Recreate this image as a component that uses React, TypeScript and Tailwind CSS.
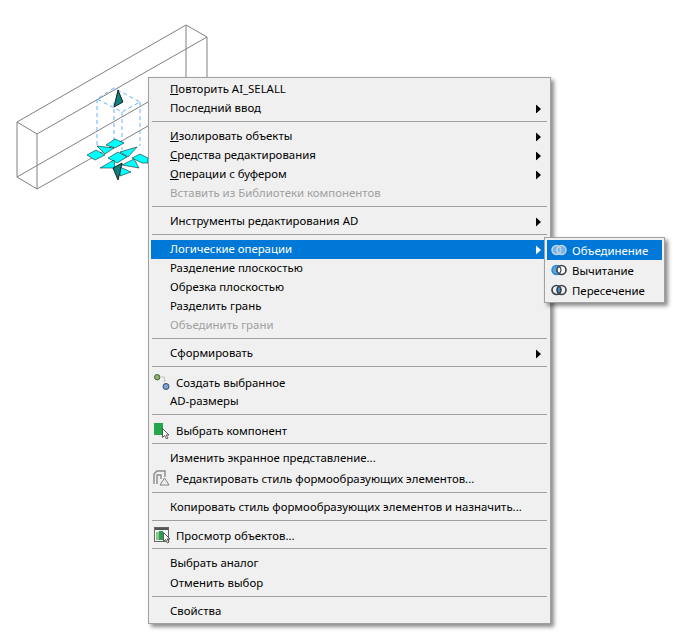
import type { ReactNode } from "react";

type Row = {
  label?: string;
  mnemonic?: boolean;
  arrow?: boolean;
  disabled?: boolean;
  active?: boolean;
  icon?: ReactNode;
  h?: string;
  shift?: string;
  sep?: boolean;
};

const LENS = "M8 2.26 A4.5 4.5 0 0 1 8 9.74 A4.5 4.5 0 0 1 8 2.26 Z";

function Arrow({ white }: { white?: boolean }) {
  return (
    <svg width="5" height="9" viewBox="0 0 5 9" className="absolute right-[7px] top-1/2 -translate-y-1/2">
      <path d="M0 0 L5 4.5 L0 9 Z" fill={white ? "#ffffff" : "#000000"} />
    </svg>
  );
}

function FavoriteIcon() {
  return (
    <svg width="18" height="18" viewBox="0 0 18 18">
      <path d="M7 3 H10.5 V7 M9.5 6 L10.5 7.5 L11.5 6" fill="none" stroke="#c4c4c4" />
      <circle cx="3.2" cy="3.2" r="2.7" fill="#8fb36c" stroke="#46603a" />
      <circle cx="12" cy="12.5" r="3" fill="#7fa3d0" stroke="#2f4a6e" />
    </svg>
  );
}

function Cursor({ x, y }: { x: number; y: number }) {
  return (
    <path
      d={`M${x + 0.5} ${y + 0.5} v9 l2 -2 l2 3.5 l1.5 -1 l-2 -3 h3 Z`}
      fill="#ffffff"
      stroke="#333333"
      strokeWidth="0.8"
    />
  );
}

function PickIcon() {
  return (
    <svg width="18" height="16" viewBox="0 0 18 16">
      <rect x="0" y="0" width="9" height="12" fill="#22a84a" />
      <Cursor x={8} y={5} />
    </svg>
  );
}

function StyleIcon() {
  return (
    <svg width="18" height="16" viewBox="0 0 18 16">
      <path d="M1 14 V4 L4 1 H12 V7 M4 14 V5 H8 V9" fill="none" stroke="#8a8a8a" strokeWidth="1.4" />
      <path d="M7 15 L11.5 8 L16 15 Z" fill="#f2f2f2" stroke="#808080" />
    </svg>
  );
}

function ViewIcon() {
  return (
    <svg width="18" height="17" viewBox="0 0 18 17">
      <rect x="0.5" y="0.5" width="14" height="14" fill="#f4f4f4" stroke="#666666" />
      <rect x="1" y="1" width="13" height="2" fill="#555555" />
      <rect x="2" y="5" width="3" height="8" fill="#86c98f" />
      <rect x="5" y="4" width="4" height="9" fill="#2f9c4f" />
      <Cursor x={9} y={5} />
    </svg>
  );
}

function Venn({ kind, onBlue }: { kind: "union" | "subtract" | "intersect"; onBlue?: boolean }) {
  if (kind === "union") {
    const edge = onBlue ? "#c3d3e2" : "#5a6470";
    return (
      <svg width="16" height="12" viewBox="0 0 16 12">
        <circle cx="5.5" cy="6" r="4.5" fill="#73b4ea" stroke={edge} strokeWidth="1.5" />
        <circle cx="10.5" cy="6" r="4.5" fill="#73b4ea" stroke={edge} strokeWidth="1.5" />
        <path d={LENS} fill="#7fb9ea" stroke={edge} strokeWidth="1.2" />
      </svg>
    );
  }
  if (kind === "subtract") {
    return (
      <svg width="16" height="12" viewBox="0 0 16 12">
        <circle cx="5.5" cy="6" r="4.5" fill="#5aa5e0" stroke="#2f86d0" strokeWidth="1.5" />
        <circle cx="10.5" cy="6" r="4.5" fill="#f8f8f8" stroke="#3f444a" strokeWidth="1.7" />
        <path d={LENS} fill="#ffffff" stroke="#3f444a" strokeWidth="1.2" />
      </svg>
    );
  }
  return (
    <svg width="16" height="12" viewBox="0 0 16 12">
      <path d={LENS} fill="#3f8fd8" />
      <circle cx="5.5" cy="6" r="4.5" fill="none" stroke="#3f444a" strokeWidth="1.7" />
      <circle cx="10.5" cy="6" r="4.5" fill="none" stroke="#3f444a" strokeWidth="1.7" />
    </svg>
  );
}

const rows: Row[] = [
  { label: "Повторить AI_SELALL", mnemonic: true },
  { label: "Последний ввод", arrow: true },
  { sep: true },
  { label: "Изолировать объекты", mnemonic: true, arrow: true },
  { label: "Средства редактирования", mnemonic: true, arrow: true },
  { label: "Операции с буфером", mnemonic: true, arrow: true },
  { label: "Вставить из Библиотеки компонентов", disabled: true },
  { sep: true },
  { label: "Инструменты редактирования AD", arrow: true },
  { sep: true },
  { label: "Логические операции", arrow: true, active: true },
  { label: "Разделение плоскостью" },
  { label: "Обрезка плоскостью" },
  { label: "Разделить грань" },
  { label: "Объединить грани", disabled: true },
  { sep: true },
  { label: "Сформировать", arrow: true },
  { sep: true },
  { label: "Создать выбранное", icon: <span className="mt-[2px] ml-[3px] flex"><FavoriteIcon /></span>, h: "h-[20px]", shift: "pt-[2px]" },
  { label: "AD-размеры" },
  { sep: true },
  { label: "Выбрать компонент", icon: <span className="mt-[3px] ml-[3px] flex"><PickIcon /></span>, h: "h-[20px]", shift: "pt-[2px]" },
  { sep: true },
  { label: "Изменить экранное представление..." },
  { label: "Редактировать стиль формообразующих элементов...", icon: <span className="mt-[2px] ml-[2px] flex"><StyleIcon /></span>, h: "h-[21px]", shift: "pb-0" },
  { sep: true },
  { label: "Копировать стиль формообразующих элементов и назначить..." },
  { sep: true },
  { label: "Просмотр объектов...", icon: <span className="mt-[1px] ml-[3px] flex"><ViewIcon /></span>, shift: "pb-0" },
  { sep: true },
  { label: "Выбрать аналог", h: "h-[20px]" },
  { label: "Отменить выбор" },
  { sep: true },
  { label: "Свойства" },
];

function MenuRow({ row }: { row: Row }) {
  if (row.sep) {
    return (
      <div className="h-[9px] px-[1px] pt-[3px]">
        <div className="h-px w-full bg-[#a0a0a0]" />
      </div>
    );
  }
  const color = row.active ? "text-white" : row.disabled ? "text-[#a0a0a0]" : "text-black";
  const label = row.label ?? "";
  return (
    <div
      className={`relative flex items-center ${row.h ?? "h-[19px]"} ${row.active ? "bg-[#0078d7]" : ""} ${color} ${row.icon ? "pl-[25px]" : "pl-[19px]"}`}
    >
      {row.icon && <span className="absolute left-0 top-0 flex">{row.icon}</span>}
      <span className={`whitespace-nowrap ${row.shift ?? "pb-[2px]"}`}>
        {row.mnemonic ? (
          <>
            <span className="underline">{label[0]}</span>
            {label.slice(1)}
          </>
        ) : (
          label
        )}
      </span>
      {row.arrow && <Arrow white={row.active} />}
    </div>
  );
}

function Drawing() {
  return (
    <svg width="210" height="192" viewBox="0 0 210 192" className="absolute left-0 top-0">
      <g stroke="#808080" fill="none">
        <path d="M186 25 L207 37 M17 122 L186 25 M37 134 L207 37 M17 122 L37 134 M17 122 V177 M37 134 V189 M17 177 L37 189 M186 25 V77 M207 37 V77" />
        <path d="M37 189 L148 126 M17 177 L148 102" />
      </g>
      <g stroke="#66b2ff" fill="none" strokeDasharray="4 3">
        <path d="M114 88 L97 99 L122 112 L140 102 L114 88 M97 99 V146 M140 102 V146 M122 112 V150 M114 102 V142" />
      </g>
      <path d="M118 90 L123 102 L114 107 Z" fill="#0f7f7f" stroke="#000000" strokeWidth="0.8" />
      <g fill="#00ffff" stroke="#000000" strokeWidth="0.5">
        <path d="M106 145 L115 139 L124 143 L115 148 Z" />
        <path d="M87 155 L96 150 L105 155 L95 160 Z" />
        <path d="M97 146 L114 148 L105 154 Z" />
        <path d="M120 152 L137 147 L128 157 Z" />
        <path d="M108 158 L118 152 L127 157 L117 163 Z" />
        <path d="M100 168 L114 160 L115 168 Z" />
        <path d="M132 158 L140 154 L148 158 L148 163 L142 163 Z" />
        <path d="M122 165 L134 159 L139 168 Z" />
        <path d="M120 167 L131 172 L120 176 Z" />
      </g>
      <path d="M113 168 L122 163 L120 172 L118 180 Z" fill="#0f7f7f" stroke="#000000" strokeWidth="0.8" />
    </svg>
  );
}

export default function App() {
  return (
    <div className="relative h-[641px] w-[673px] overflow-hidden bg-white font-['Noto_Sans',sans-serif] text-[11.4px] leading-none">
      <Drawing />
      <div className="absolute left-[148px] top-[77px] w-[403px] border border-[#a0a0a0] bg-[#f0f0f0] p-[2px] shadow-[3px_3px_4px_rgba(0,0,0,0.45)]">
        {rows.map((row, i) => (
          <MenuRow key={i} row={row} />
        ))}
      </div>
      <div className="absolute left-[544px] top-[237px] w-[121px] border border-[#a0a0a0] bg-[#f0f0f0] p-[2px] shadow-[3px_3px_4px_rgba(0,0,0,0.45)]">
        <div className="flex h-[20px] items-center gap-[5px] bg-[#0078d7] pl-[4px] text-white">
          <Venn kind="union" onBlue />
          <span className="pt-[2px]">Объединение</span>
        </div>
        <div className="flex h-[20px] items-center gap-[5px] pl-[4px] text-black">
          <Venn kind="subtract" />
          <span className="pt-[2px]">Вычитание</span>
        </div>
        <div className="flex h-[20px] items-center gap-[5px] pl-[4px] text-black">
          <Venn kind="intersect" />
          <span className="pt-[2px]">Пересечение</span>
        </div>
      </div>
    </div>
  );
}
